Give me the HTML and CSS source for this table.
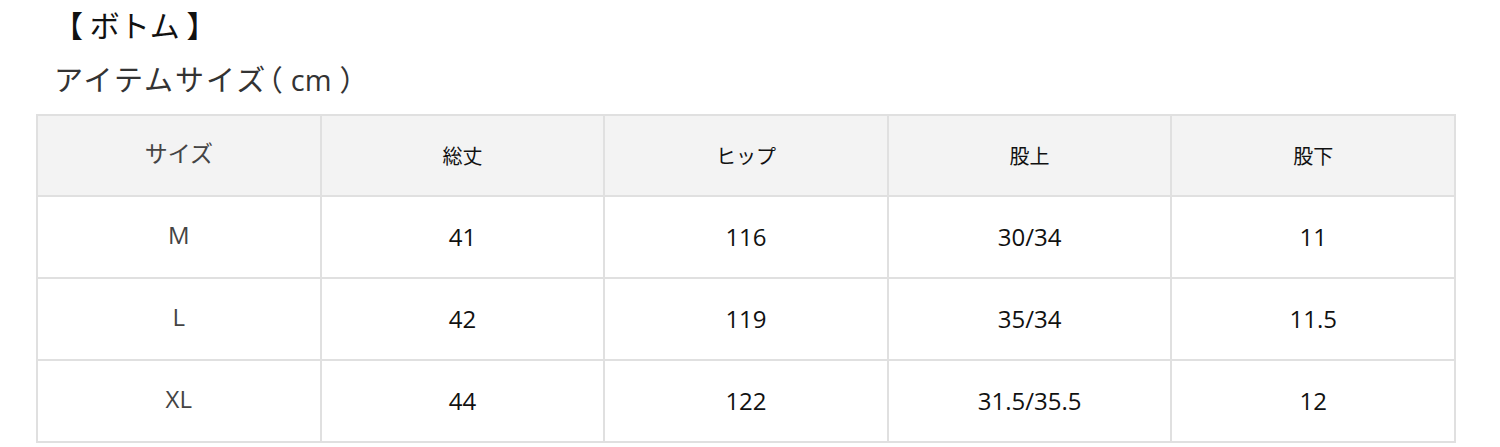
FILE: index.html
```html
<!DOCTYPE html>
<html lang="ja">
<head>
<meta charset="utf-8">
<link rel="stylesheet" href="styles.css">
</head>
<body>
<div class="wrap">
  <h2 class="title">【 ボトム 】</h2>
  <h3 class="subtitle">アイテムサイズ<span class="paren">（<span class="unit">cm</span>）</span></h3>
  <table class="size-table">
    <thead>
      <tr>
        <th class="first">サイズ</th>
        <th>総丈</th>
        <th>ヒップ</th>
        <th>股上</th>
        <th>股下</th>
      </tr>
    </thead>
    <tbody>
      <tr><td class="first">M</td><td>41</td><td>116</td><td>30/34</td><td>11</td></tr>
      <tr><td class="first">L</td><td>42</td><td>119</td><td>35/34</td><td>11.5</td></tr>
      <tr><td class="first">XL</td><td>44</td><td>122</td><td>31.5/35.5</td><td>12</td></tr>
    </tbody>
  </table>
</div>
</body>
</html>
```

FILE: styles.css
```css
html, body {
  margin: 0;
  padding: 0;
  background: #fff;
}
body {
  font-family: "Noto Sans CJK JP", "Noto Sans", sans-serif;
  color: #111;
}
.wrap {
  padding: 2px 0 0 36px;
  width: 1420px;
}
.title {
  margin: 0 0 0 17px;
  font-size: 30px;
  font-weight: 400;
  line-height: 44px;
  color: #111;
  white-space: pre;
}
.subtitle {
  margin: 12px 0 14px 18px;
  font-size: 29px;
  font-weight: 400;
  line-height: 40px;
  color: #333;
  letter-spacing: 2px;
}
.paren {
  letter-spacing: 0;
  font-feature-settings: "palt";
}
.unit {
  font-family: "Open Sans", "Noto Sans", sans-serif;
  margin: 0 9px;
}
.size-table {
  width: 1420px;
  border-collapse: collapse;
  table-layout: fixed;
}
.size-table th,
.size-table td {
  border: 2px solid #e0e0e0;
  text-align: center;
  font-weight: 400;
  padding: 0;
  line-height: 1.2;
}
.size-table th {
  height: 74px;
  background: #f3f3f3;
  font-size: 20px;
  color: #111;
}
.size-table td {
  height: 77px;
  font-family: "Open Sans", "Noto Sans", sans-serif;
  font-size: 24px;
  color: #111;
}
.size-table .first {
  color: #444;
}
.size-table th.first {
  font-size: 23px;
  padding-bottom: 5px;
}
.size-table td.first {
  padding-bottom: 3px;
}
```
